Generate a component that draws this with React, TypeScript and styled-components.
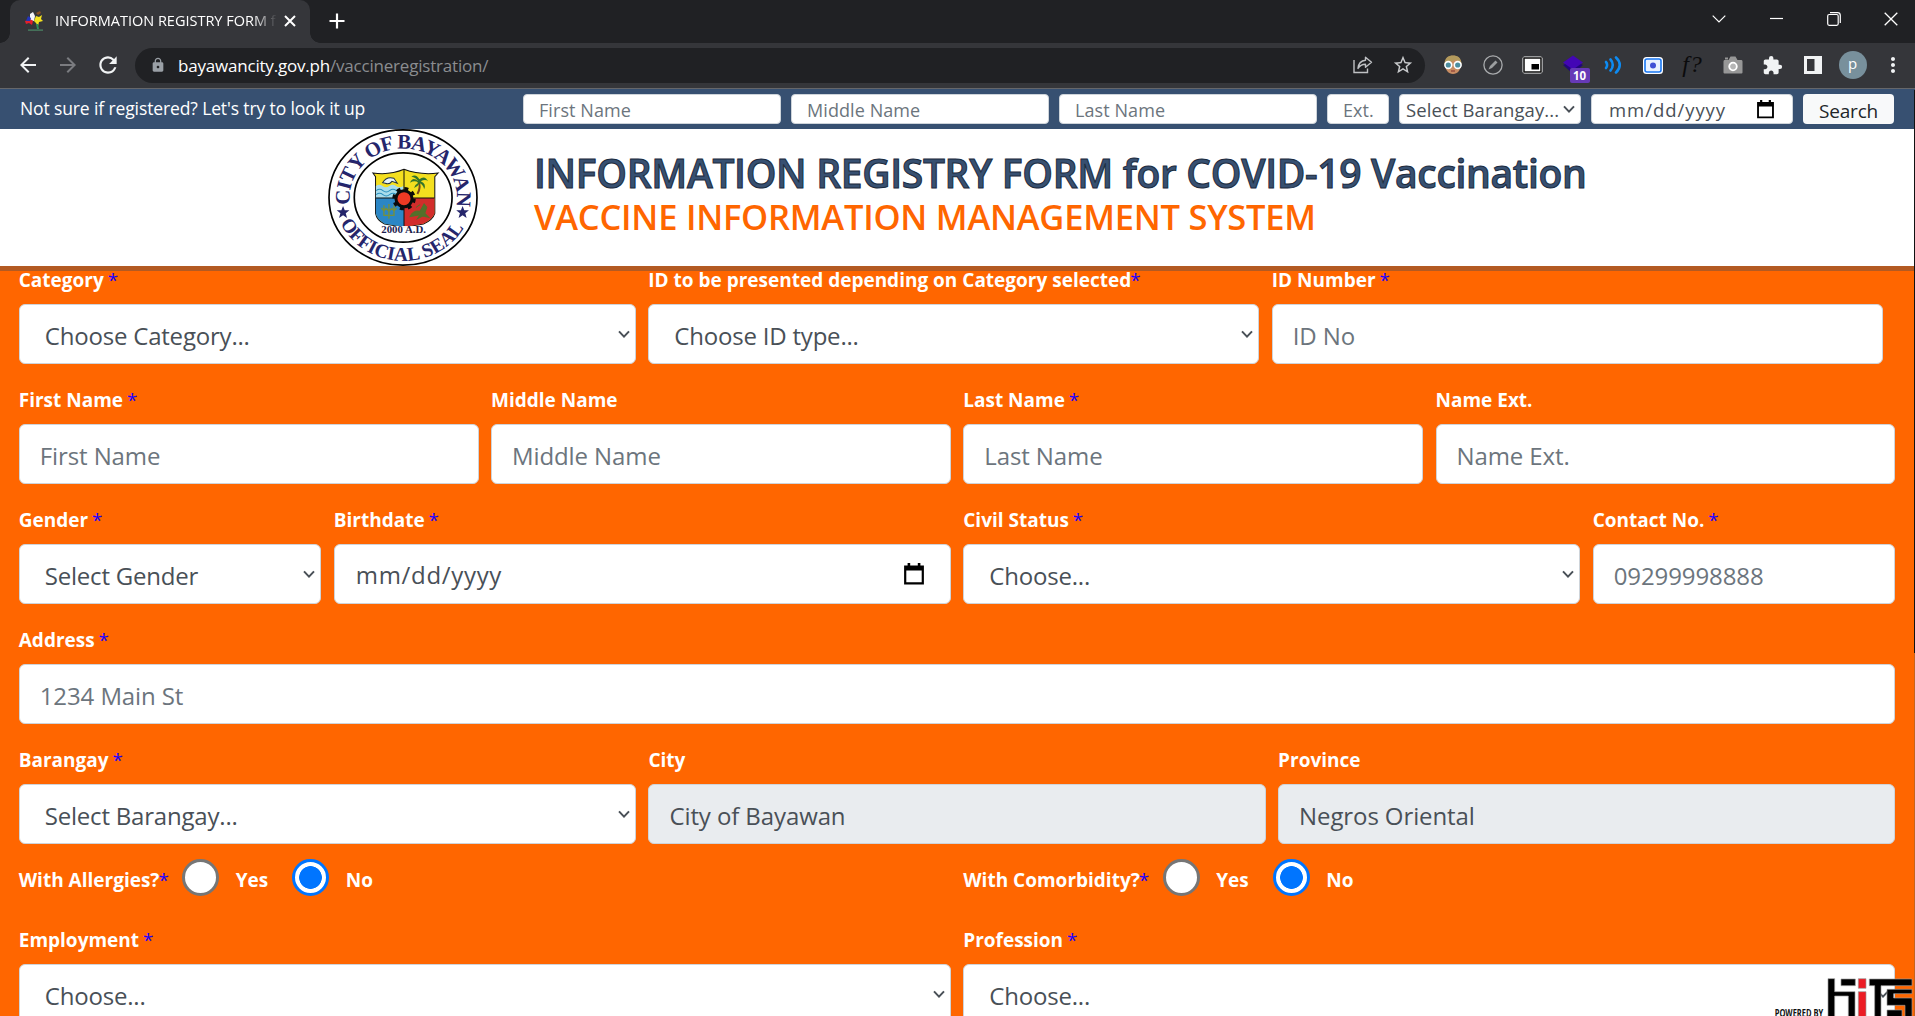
import React from 'react';
import styled, { createGlobalStyle } from 'styled-components';
import {
  MdArrowBack,
  MdArrowForward,
  MdRefresh,
  MdLock,
  MdStarBorder,
  MdExtension,
  MdMoreVert,
} from 'react-icons/md';

const GlobalStyle = createGlobalStyle`
  * { box-sizing: border-box; }
  html, body { margin: 0; padding: 0; overflow: hidden; }
  body { font-family: "Open Sans", "Noto Sans", sans-serif; background: #ff6600; }
  input, button { font-family: inherit; }
`;

/* ---------- browser chrome ---------- */

const Window = styled.div`
  position: relative;
  width: 1915px;
  height: 1016px;
  overflow: hidden;
  display: flex;
  flex-direction: column;
`;

const TabStrip = styled.div`
  height: 43px;
  flex: none;
  display: flex;
  align-items: stretch;
  background: #202124;
  padding-left: 10px;
`;

const Tab = styled.div`
  position: relative;
  width: 300px;
  display: flex;
  align-items: center;
  justify-content: space-between;
  padding: 0 14px 2px 15px;
  background: #35363a;
  border-radius: 10px 10px 0 0;
  &::before,
  &::after {
    content: '';
    position: absolute;
    bottom: 0;
    width: 10px;
    height: 10px;
  }
  &::before {
    left: -10px;
    background: radial-gradient(circle at 0 0, #202124 9.5px, #35363a 10px);
  }
  &::after {
    right: -10px;
    background: radial-gradient(circle at 100% 0, #202124 9.5px, #35363a 10px);
  }
`;

const TabTitle = styled.span`
  margin: 0 auto 0 10px;
  width: 222px;
  overflow: hidden;
  white-space: nowrap;
  font-size: 14.5px;
  letter-spacing: 0;
  color: #fff;
  mask-image: linear-gradient(90deg, #000 198px, transparent 222px);
`;

const NewTab = styled.div`
  width: 54px;
  display: flex;
  align-items: center;
  justify-content: center;
  padding-bottom: 1px;
`;

const WindowControls = styled.div`
  margin: 0 -5px 0 auto;
  display: flex;
  align-items: center;
  padding-bottom: 6px;
`;

const ControlCell = styled.div`
  width: 57.4px;
  display: flex;
  justify-content: center;
`;

const Toolbar = styled.div`
  height: 46px;
  flex: none;
  display: flex;
  align-items: center;
  background: #35363a;
  border-bottom: 1px solid #66676a;
  padding: 0 2.5px 1px 7.5px;
`;

const Cell = styled.div<{ $color?: string }>`
  position: relative;
  width: 40px;
  height: 36px;
  flex: none;
  display: flex;
  align-items: center;
  justify-content: center;
  color: ${(p) => p.$color ?? '#f1f3f4'};
`;

const Omnibox = styled.div`
  flex: 1;
  height: 35px;
  margin: 0 7.5px;
  border-radius: 18px;
  background: #202124;
  display: flex;
  align-items: center;
  padding: 0 2px 0 14.5px;
  color: #9aa0a6;
`;

const Url = styled.span`
  margin-left: 12.5px;
  margin-right: auto;
  font-size: 17px;
  letter-spacing: -0.2px;
  color: #8b8d90;
  b {
    font-weight: 400;
    color: #fff;
  }
`;

const Badge = styled.span`
  position: absolute;
  left: 17px;
  top: 21px;
  width: 20px;
  height: 15px;
  border-radius: 2px;
  background: #673ab7;
  color: #fff;
  font-size: 11.5px;
  font-weight: 700;
  line-height: 15px;
  text-align: center;
`;

const FnIcon = styled.span`
  font: italic 24px/30px 'Liberation Serif', serif;
  letter-spacing: 1px;
  padding-bottom: 2px;
  color: #0b0b0c;
`;

const Avatar = styled.span`
  width: 28px;
  height: 28px;
  border-radius: 50%;
  background: #78909c;
  color: #fff;
  font-size: 15px;
  line-height: 25px;
  text-align: center;
`;

/* ---------- lookup bar ---------- */

const LookupBar = styled.div`
  height: 40px;
  flex: none;
  display: flex;
  align-items: center;
  gap: 10px;
  background: #375071;
  padding: 0 21px 0 20px;
`;

const LookupHint = styled.span`
  width: 493px;
  padding-bottom: 2px;
  font-size: 17.5px;
  letter-spacing: -0.12px;
  color: #fff;
  white-space: nowrap;
`;

const SmallInput = styled.input<{ $w: number }>`
  width: ${(p) => p.$w}px;
  height: 30px;
  border: 1px solid #ced4da;
  border-radius: 4px;
  background: #fff;
  padding: 2px 0 0 15px;
  font-size: 18px;
  letter-spacing: 0.08px;
  outline: none;
  &::placeholder {
    color: #6c757d;
    opacity: 1;
  }
`;

const SmallPicker = styled.div<{ $w: number; $pad: string; $spacing?: string }>`
  width: ${(p) => p.$w}px;
  height: 30px;
  border: 1px solid #ced4da;
  border-radius: 4px;
  background: #fff;
  padding: ${(p) => p.$pad};
  display: flex;
  align-items: center;
  justify-content: space-between;
  font-size: 18.5px;
  letter-spacing: ${(p) => p.$spacing ?? '0.1px'};
  white-space: nowrap;
  color: #495057;
`;

const SearchButton = styled.button`
  width: 91px;
  height: 30px;
  border: 0;
  border-radius: 4px;
  background: #f8f9fa;
  color: #212529;
  font-size: 19px;
  letter-spacing: -0.2px;
  line-height: 30px;
  padding: 2px 0 0;
`;

/* ---------- page header ---------- */

const Header = styled.header`
  height: 142px;
  flex: none;
  position: relative;
  z-index: 1;
  display: flex;
  background: #fff;
  border-bottom: 5px solid #b35a22;
  padding-left: 328px;
`;

const Titles = styled.div`
  padding: 20px 0 0 56px;
  white-space: nowrap;
`;

const MainTitle = styled.h1`
  margin: 0;
  font-size: 39px;
  line-height: 48px;
  font-weight: 600;
  letter-spacing: -0.31px;
  color: #375071;
  -webkit-text-stroke: 1px #1b2a3d;
`;

const SubTitle = styled.h2`
  margin: 0;
  font-size: 34.5px;
  line-height: 40px;
  font-weight: 600;
  letter-spacing: -0.24px;
  color: #ff6600;
`;

/* ---------- form ---------- */

const Form = styled.form`
  flex: 1;
  background: #ff6600;
  margin-top: -7px;
  padding: 0 19.75px 0 18.75px;
`;

const Row = styled.div<{ $cols: string; $inset?: number }>`
  display: grid;
  grid-template-columns: ${(p) => p.$cols};
  column-gap: 12.5px;
  margin-bottom: 20px;
  padding-right: ${(p) => p.$inset ?? 0}px;
`;

const Field = styled.div`
  min-width: 0;
`;

const Label = styled.label`
  display: block;
  height: 30px;
  margin-bottom: 10px;
  font-size: 19px;
  line-height: 33px;
  font-weight: 700;
  color: #fff;
  white-space: nowrap;
`;

const Star = styled.span`
  margin-left: -1px;
  color: #1a00ff;
  font-weight: 400;
`;

const Input = styled.input`
  display: block;
  width: 100%;
  height: 60px;
  border: 1px solid #ced4da;
  border-radius: 6px;
  background: #fff;
  padding: 2px 20px 0 20px;
  font-size: 24px;
  letter-spacing: -0.1px;
  color: #495057;
  outline: none;
  &::placeholder {
    color: #6c757d;
    opacity: 1;
  }
  &:read-only:not(:placeholder-shown) {
    background: #e9ecef;
  }
`;

const Picker = styled.div<{ $date?: boolean }>`
  height: 60px;
  border: 1px solid #ced4da;
  border-radius: 6px;
  background: #fff;
  padding: ${(p) => (p.$date ? '0 26px 0 21px' : '0 4px 0 25px')};
  display: flex;
  align-items: center;
  justify-content: space-between;
  font-size: 24px;
  letter-spacing: ${(p) => (p.$date ? 0.68 : -0.2)}px;
  color: #495057;
  span {
    padding-top: ${(p) => (p.$date ? 0 : 2)}px;
  }
`;

const RadioRow = styled.div`
  display: grid;
  grid-template-columns: 1fr 1fr;
  column-gap: 12.5px;
  height: 60px;
`;

const RadioGroup = styled.div`
  display: flex;
  align-items: flex-start;
`;

const RadioText = styled.span<{ $w: number }>`
  width: ${(p) => p.$w}px;
  flex: none;
  font-size: 19px;
  line-height: 33px;
  font-weight: 700;
  color: #fff;
  white-space: nowrap;
`;

const Radio = styled.span<{ $on?: boolean }>`
  width: 37px;
  height: 37px;
  flex: none;
  margin: -5px 16.5px 0 0;
  border: 3px solid ${(p) => (p.$on ? '#0075ff' : '#767676')};
  border-radius: 50%;
  background: ${(p) =>
    p.$on ? 'radial-gradient(circle, #0075ff 11px, #fff 11.7px)' : '#fff'};
`;

const Sponsor = styled.svg`
  position: absolute;
  right: 0;
  bottom: 0;
`;

const ScrollEdge = styled.div`
  position: absolute;
  z-index: 2;
  top: 90px;
  right: 0;
  bottom: 0;
  width: 1px;
  background: linear-gradient(#111 563px, #c4641f 563px);
`;

/* ---------- drawings ---------- */

const Chevron = ({ size = 14 }: { size?: number }) => (
  <svg width={size} height={size * 0.6} viewBox="0 0 14 8.4">
    <path d="M2 1.4 7 6.6 12 1.4" fill="none" stroke="#495057" strokeWidth="2" />
  </svg>
);

const Calendar = ({ size = 20 }: { size?: number }) => (
  <svg width={size} height={size * 1.1} viewBox="0 0 20 22">
    <path d="M1.2 3.6h17.6v16.8H1.2z" fill="none" stroke="#000" strokeWidth="2.2" />
    <path d="M1 3h18v4.6H1zM3.6 0h2.6v4H3.6zM13.8 0h2.6v4h-2.6z" fill="#000" />
  </svg>
);

const Favicon = () => (
  <svg width="20" height="20" viewBox="0 0 20 20">
    <path d="M5 3 8 1 10 5 9 10 5 9z" fill="#f4f4fa" />
    <path d="M0 10 5 8 8 10 7 14 4 12 1 13z" fill="#e4202c" />
    <path d="M3 5 6 7 5 10 1 10z" fill="#2334b8" />
    <path d="M11 5 14 6 17 4 16 8 18 10 14 11 13 15 11 12 9 10z" fill="#f5e31e" />
    <path d="M11 2 15 0 16 2 13 4z" fill="#8a4f24" />
    <path d="M11 13 13 13 14 18 12 18z" fill="#2e8f55" />
    <path d="M3 18.5h15v1.2H3z" fill="#4d8a67" />
  </svg>
);

const ShareIcon = () => (
  <svg width="20" height="18" viewBox="0 0 20 18" fill="none" stroke="#bfc1c4" strokeWidth="1.4">
    <path d="M1 4v12.5h13.5V12.5" />
    <path d="M12.5 1.2 18.5 6.3 12.5 11.2V8.2C8.5 8.2 6.6 9.6 5 12.4 5.4 7.6 8 4.6 12.5 4.2z" strokeLinejoin="round" />
  </svg>
);

const Face = () => (
  <svg width="20" height="20" viewBox="0 0 20 20">
    <path d="M2 9C2 3 6 .8 10 .8S18 3 18 9c0 6-3.5 10-8 10S2 15 2 9z" fill="#c98d63" />
    <path d="M1.5 9C1.5 3 5 .5 10 .5S18.5 3 18.5 9L13 4.5C9 7 5 7 1.5 9z" fill="#b39a5c" />
    <circle cx="5.3" cy="10" r="3.4" fill="#4c8ea0" stroke="#fff" strokeWidth="1.6" />
    <circle cx="14.7" cy="10" r="3.4" fill="#4c8ea0" stroke="#fff" strokeWidth="1.6" />
    <path d="M8 16h4" stroke="#8b3d35" strokeWidth="1.2" />
  </svg>
);

const NoPen = () => (
  <svg width="20" height="20" viewBox="0 0 20 20">
    <circle cx="10" cy="10" r="9.1" fill="none" stroke="#a9abad" strokeWidth="1.3" />
    <path d="M5.5 14.5 7 11 12.5 5.5 14.5 7.5 9 13z" fill="#9c9ea0" />
  </svg>
);

const PipIcon = () => (
  <svg width="21" height="18" viewBox="0 0 21 18">
    <rect x=".5" y=".5" width="20" height="17" rx="2" fill="#fff" />
    <rect x="2" y="2" width="17" height="14" fill="#fff" stroke="#0a0a0a" strokeWidth="1.5" />
    <path d="M9.5 8h7.5v5.5H9.5z" fill="#000" />
  </svg>
);

const Layers = () => (
  <svg width="20" height="20" viewBox="0 0 20 20">
    <path d="M0 10 10 5 20 10 10 19z" fill="#22087a" />
    <path d="M0 7.5 10 .5 20 7.5 10 14.5z" fill="#4306b5" />
  </svg>
);

const Waves = () => (
  <svg width="18" height="18" viewBox="0 0 18 18" fill="none" stroke="#0d8bf2" strokeWidth="2.6" strokeLinecap="round">
    <path d="M2 6C3.5 7.5 3.5 10.5 2 12" />
    <path d="M6.5 3.5C9.5 6.5 9.5 11.5 6.5 14.5" />
    <path d="M12 1.5C17 6 17 12 12 16.5" />
  </svg>
);

const BlueFrame = () => (
  <svg width="20" height="17" viewBox="0 0 20 17">
    <rect width="20" height="17" rx="3.5" fill="#fff" />
    <rect x="2" y="2" width="16" height="13" rx="2" fill="#e9f2ff" stroke="#1877f2" strokeWidth="1.6" />
    <circle cx="10" cy="8.5" r="3" fill="#3f51d5" />
  </svg>
);

const Camera = () => (
  <svg width="20" height="18" viewBox="0 0 20 18">
    <path d="M1.5 4H5.5L7.5 .5h5L14.5 4h4Q19.5 4 19.5 5.5v11Q19.5 17.5 18.5 17.5h-17Q.5 17.5.5 16.5v-11Q.5 4 1.5 4z" fill="#979797" />
    <path d="M2 1.5h3v2H2z" fill="#979797" />
    <circle cx="10" cy="10.5" r="3.8" fill="#b5b5b5" stroke="#fff" strokeWidth="1.8" />
  </svg>
);

const SidePanel = () => (
  <svg width="18" height="18" viewBox="0 0 18 18">
    <path d="M0 0h18v18H0z" fill="#f1f3f4" />
    <path d="M3 3h7.5v12H3z" fill="#35363a" />
  </svg>
);

const Seal = () => (
  <svg width="150" height="137" viewBox="55 27 448 411" preserveAspectRatio="none">
    <ellipse cx="279" cy="232.5" rx="221" ry="203" fill="#fff" stroke="#000" strokeWidth="5" />
    <ellipse cx="279.5" cy="232.5" rx="146" ry="134" fill="#fff" stroke="#000" strokeWidth="5" />
    <path id="sealTop" d="M121 254A160 148 0 1 1 438 254" fill="none" />
    <path id="sealBottom" d="M92 308A204 187 0 0 0 468 308" fill="none" />
    <g fill="#25256b" fontFamily="'Liberation Serif', serif" fontWeight="700">
      <text fontSize="62">
        <textPath href="#sealTop" textLength="530">CITY OF BAYAWAN</textPath>
      </text>
      <text fontSize="58">
        <textPath href="#sealBottom" textLength="448">OFFICIAL SEAL</textPath>
      </text>
      <path d="M100 258 105 271 119 271 108 280 112 294 100 286 88 294 92 280 81 271 95 271z" />
      <path d="M457 258 462 271 476 271 465 280 469 294 457 286 445 294 449 280 438 271 452 271z" />
    </g>
    <path d="M189 159Q240 166 282 148Q330 166 384 159L374 170V280Q368 300 340 312L282 322 224 312Q200 300 197 280V170z" fill="#f4df1f" stroke="#111" strokeWidth="3" />
    <path d="M198 198q10-8 20 0t20 0 20 0 22 0V234H198z" fill="#a8dcec" />
    <path d="M199 212q10-8 20 0t20 0 20 0 20 0M199 224q10-8 20 0t20 0 20 0 20 0" fill="none" stroke="#2a8fbd" strokeWidth="3" />
    <path d="M218 188Q230 168 252 175L262 190 246 184Q238 195 226 190z" fill="#e8f4f8" stroke="#234" strokeWidth="3" />
    <path d="M198 234H282V321L224 311Q200 298 198 280z" fill="#2b86c5" />
    <path d="M282 234H373V280Q368 298 340 311L282 321z" fill="#d22d2b" />
    <path d="M282 150V318M198 234H373" stroke="#111" strokeWidth="3" />
    <path d="M322 222Q334 200 325 186" fill="none" stroke="#7b4a1d" strokeWidth="6" />
    <path d="M325 184Q308 168 300 188Q314 180 325 188Q316 192 312 204Q324 200 328 190Q340 194 342 208Q350 192 332 184Q346 176 354 184Q344 164 328 178Q318 160 304 170Q318 172 325 184z" fill="#33752b" />
    <path d="M222 288V256M237 296V252M252 288V256M222 272l-8-8M222 272l8-8M237 274l-8-9M237 274l8-9M252 272l-8-8M252 272l8-8M220 286h34" stroke="#77903a" strokeWidth="4" fill="none" />
    <path d="M300 290Q310 270 330 274L342 252 350 262 344 280 356 292 338 288 322 296 330 284zM318 262l12-8" fill="#54702a" stroke="#54702a" strokeWidth="3" />
    <circle cx="282" cy="236" r="28" fill="none" stroke="#0c0c0c" strokeWidth="14" strokeDasharray="11 11" />
    <circle cx="282" cy="236" r="24" fill="#ee3a24" stroke="#0c0c0c" strokeWidth="9" />
    <path d="M205 318h150v24H205z" fill="#fff" opacity="0.9" />
    <text x="214" y="340" fontSize="30" fontWeight="700" fontFamily="'Liberation Serif', serif" fill="#1d1d4d" textLength="134" lengthAdjust="spacingAndGlyphs">
      2000 A.D.
    </text>
  </svg>
);

/* ---------- pieces ---------- */

type FieldProps = { label: string; star?: string; children: React.ReactNode };

const LabeledField = ({ label, star, children }: FieldProps) => (
  <Field>
    <Label>
      {label}
      {star && <Star>{star}</Star>}
    </Label>
    {children}
  </Field>
);

const SelectField = ({ text }: { text: string }) => (
  <Picker role="combobox">
    <span>{text}</span>
    <Chevron />
  </Picker>
);

const YesNo = ({ label, width }: { label: string; width: number }) => (
  <RadioGroup>
    <RadioText $w={width}>
      {label}
      <Star>*</Star>
    </RadioText>
    <Radio />
    <RadioText $w={56.5}>Yes</RadioText>
    <Radio $on />
    <RadioText $w={40}>No</RadioText>
  </RadioGroup>
);

export default function App() {
  return (
    <Window>
      <GlobalStyle />
      <TabStrip>
        <Tab>
          <Favicon />
          <TabTitle>INFORMATION REGISTRY FORM f</TabTitle>
          <svg width="12" height="12" viewBox="0 0 12 12">
            <path d="M1 1 11 11M11 1 1 11" stroke="#fff" strokeWidth="2" />
          </svg>
        </Tab>
        <NewTab>
          <svg width="16" height="16" viewBox="0 0 16 16">
            <path d="M8 .5v15M.5 8h15" stroke="#fff" strokeWidth="2.2" />
          </svg>
        </NewTab>
        <WindowControls>
          <ControlCell>
            <svg width="14" height="8" viewBox="0 0 14 8">
              <path d="M.7.7 7 7 13.3.7" fill="none" stroke="#fff" strokeWidth="1.2" />
            </svg>
          </ControlCell>
          <ControlCell>
            <svg width="13" height="13" viewBox="0 0 13 13">
              <path d="M0 6.5h13" stroke="#fff" strokeWidth="1.2" />
            </svg>
          </ControlCell>
          <ControlCell>
            <svg width="14" height="14" viewBox="0 0 14 14" fill="none" stroke="#fff" strokeWidth="1.2">
              <rect x=".7" y="2.5" width="10.5" height="10.8" rx="1.5" />
              <path d="M3 .7h7.5Q13.3.7 13.3 3.5V11" />
            </svg>
          </ControlCell>
          <ControlCell>
            <svg width="14" height="14" viewBox="0 0 14 14">
              <path d="M.7.7 13.3 13.3M13.3.7.7 13.3" stroke="#fff" strokeWidth="1.3" />
            </svg>
          </ControlCell>
        </WindowControls>
      </TabStrip>

      <Toolbar>
        <Cell><MdArrowBack size={24} /></Cell>
        <Cell $color="#7b7c80"><MdArrowForward size={24} /></Cell>
        <Cell><MdRefresh size={26} /></Cell>
        <Omnibox>
          <MdLock size={16} />
          <Url><b>bayawancity.gov.ph</b>/vaccineregistration/</Url>
          <Cell><ShareIcon /></Cell>
          <Cell $color="#c8cacc"><MdStarBorder size={22} /></Cell>
        </Omnibox>
        <Cell><Face /></Cell>
        <Cell><NoPen /></Cell>
        <Cell><PipIcon /></Cell>
        <Cell><Layers /><Badge>10</Badge></Cell>
        <Cell><Waves /></Cell>
        <Cell><BlueFrame /></Cell>
        <Cell><FnIcon>f?</FnIcon></Cell>
        <Cell><Camera /></Cell>
        <Cell><MdExtension size={21} /></Cell>
        <Cell><SidePanel /></Cell>
        <Cell><Avatar>p</Avatar></Cell>
        <Cell><MdMoreVert size={24} /></Cell>
      </Toolbar>

      <LookupBar>
        <LookupHint>Not sure if registered? Let's try to look it up</LookupHint>
        <SmallInput $w={258} placeholder="First Name" />
        <SmallInput $w={258} placeholder="Middle Name" />
        <SmallInput $w={258} placeholder="Last Name" />
        <SmallInput $w={62} placeholder="Ext." />
        <SmallPicker $w={182} $pad="1px 4px 0 6px">
          <span>Select Barangay...</span>
          <Chevron />
        </SmallPicker>
        <SmallPicker $w={202} $pad="1px 18px 0 17px" $spacing="0.95px">
          <span>mm/dd/yyyy</span>
          <Calendar size={17} />
        </SmallPicker>
        <SearchButton type="button">Search</SearchButton>
      </LookupBar>

      <Header>
        <Seal />
        <Titles>
          <MainTitle>INFORMATION REGISTRY FORM for COVID-19 Vaccination</MainTitle>
          <SubTitle>VACCINE INFORMATION MANAGEMENT SYSTEM</SubTitle>
        </Titles>
      </Header>

      <Form>
        <Row $cols="617fr 611fr 611fr" $inset={12.5}>
          <LabeledField label="Category " star="*"><SelectField text="Choose Category..." /></LabeledField>
          <LabeledField label="ID to be presented depending on Category selected" star="*"><SelectField text="Choose ID type..." /></LabeledField>
          <LabeledField label="ID Number " star="*"><Input placeholder="ID No" /></LabeledField>
        </Row>
        <Row $cols="repeat(4, 1fr)">
          <LabeledField label="First Name " star="*"><Input placeholder="First Name" /></LabeledField>
          <LabeledField label="Middle Name"><Input placeholder="Middle Name" /></LabeledField>
          <LabeledField label="Last Name " star="*"><Input placeholder="Last Name" /></LabeledField>
          <LabeledField label="Name Ext."><Input placeholder="Name Ext." /></LabeledField>
        </Row>
        <Row $cols="302.5px 617fr 617fr 302.5px">
          <LabeledField label="Gender " star="*"><SelectField text="Select Gender" /></LabeledField>
          <LabeledField label="Birthdate " star="*">
            <Picker $date>
              <span>mm/dd/yyyy</span>
              <Calendar />
            </Picker>
          </LabeledField>
          <LabeledField label="Civil Status " star="*"><SelectField text="Choose..." /></LabeledField>
          <LabeledField label="Contact No. " star="*"><Input placeholder="09299998888" /></LabeledField>
        </Row>
        <Row $cols="1fr">
          <LabeledField label="Address " star="*"><Input placeholder="1234 Main St" /></LabeledField>
        </Row>
        <Row $cols="repeat(3, 1fr)">
          <LabeledField label="Barangay " star="*"><SelectField text="Select Barangay..." /></LabeledField>
          <LabeledField label="City"><Input readOnly placeholder=" " value="City of Bayawan" /></LabeledField>
          <LabeledField label="Province"><Input readOnly placeholder=" " value="Negros Oriental" /></LabeledField>
        </Row>
        <RadioRow>
          <YesNo label="With Allergies?" width={163.5} />
          <YesNo label="With Comorbidity?" width={199.5} />
        </RadioRow>
        <Row $cols="1fr 1fr">
          <LabeledField label="Employment " star="*"><SelectField text="Choose..." /></LabeledField>
          <LabeledField label="Profession " star="*"><SelectField text="Choose..." /></LabeledField>
        </Row>
      </Form>

      <Sponsor width="150" height="50" viewBox="0 1218 450 150">
        <g stroke="#9b9b9b" strokeWidth="2" fill="#000">
          <path d="M189 1256h20v39h61v92h-20v-79h-41v79h-20z" />
          <path d="M228 1257h43v20h-43z" />
          <path d="M313 1257h128v20h-93v110h-19v-110h-16z" />
          <path d="M366 1288h75v13h-55v13h55v74h-21v-52h-54z" />
          <path d="M366 1350h45v30h-45z" />
          <g fill="#ec1c24">
            <path d="M280 1256h23v29h-23zM280 1295h23v90h-23z" />
          </g>
        </g>
        <text x="29" y="1371" fontSize="29" fontWeight="700" fill="#111" fontFamily="'Open Sans', sans-serif" textLength="146" lengthAdjust="spacingAndGlyphs">
          POWERED BY
        </text>
      </Sponsor>
      <ScrollEdge />
    </Window>
  );
}
